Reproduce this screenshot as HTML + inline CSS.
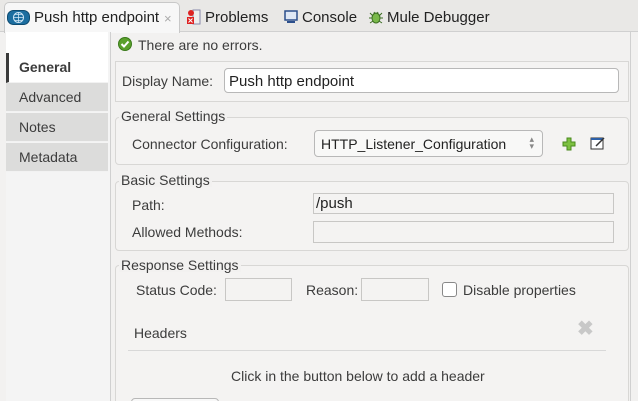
<!DOCTYPE html>
<html><head><style>
html,body{margin:0;width:638px;height:401px;overflow:hidden}
body{background:#f2f1f0;font-family:"Liberation Sans",sans-serif;font-size:14px;color:#3c3c3c;position:relative}
.a{position:absolute}
.tabbar{left:0;top:0;width:638px;height:31px;background:#e9e8e6;border-bottom:1px solid #d0d0d0}
.lbl{white-space:nowrap}
.box{background:#f4f3f2;border:1px solid #d8d7d5;border-radius:4px}
.field{background:#f4f3f2;border:1px solid #c8c7c5}
.side{left:6px;width:102px;height:29px;line-height:29px;padding-left:13px;box-sizing:border-box;background:#dcdcdb;border-bottom:1px solid #f2f2f2}
.leg{background:#f2f1f0;padding:0 2px;line-height:14px}
</style></head><body>
<div class="a tabbar"></div>
<div class="a" style="left:4px;top:2px;width:174px;height:30px;background:#f7f7f7;border:1px solid #c8c8c8;border-bottom:none;border-radius:5px 5px 0 0"></div>
<svg class="a" style="left:7px;top:10px" width="23" height="15"><rect x="0.5" y="0.5" width="22" height="14" rx="6" fill="#1c6ea0" stroke="#0e4b70"/><circle cx="11.5" cy="7.5" r="5" fill="none" stroke="#cfe6f5" stroke-width="1"/><path d="M6.5 7.5h10M11.5 2.5v10M8 4.5h7M8 10.5h7" stroke="#cfe6f5" stroke-width=".8"/></svg>
<div class="a lbl" style="left:34px;top:9px;font-size:15px;color:#222">Push http endpoint</div>
<div class="a" style="left:164px;top:11px;color:#aaa;font-size:13px">×</div>
<svg class="a" style="left:186px;top:9px" width="16" height="16"><rect x="7" y="1" width="7" height="14" fill="#eee" stroke="#88a"/><circle cx="5" cy="4" r="3" fill="#d22"/><rect x="1" y="8" width="7" height="7" fill="#d22"/><path d="M2.5 9.5l4 4M6.5 9.5l-4 4" stroke="#fff"/></svg>
<div class="a lbl" style="left:205px;top:9px;font-size:15px;color:#222">Problems</div>
<svg class="a" style="left:284px;top:10px" width="14" height="14"><rect x="1" y="1" width="12" height="9" fill="#dfe8f5" stroke="#2c4f8c" stroke-width="1.5"/><rect x="3" y="11" width="8" height="2" fill="#2c4f8c"/></svg>
<div class="a lbl" style="left:302px;top:9px;font-size:15px;color:#222">Console</div>
<svg class="a" style="left:368px;top:9px" width="16" height="16"><ellipse cx="8" cy="9" rx="4" ry="5" fill="#7ab94a" stroke="#3c6e22"/><path d="M2 4l3 3M14 4l-3 3M1 9h3M12 9h3M2 14l3-2M14 14l-3-2M6 3l1 2M10 3l-1 2" stroke="#3c6e22"/></svg>
<div class="a lbl" style="left:387px;top:9px;font-size:15px;color:#222">Mule Debugger</div>

<div class="a" style="left:6px;top:32px;width:104px;height:369px;background:#f4f4f4;border-right:1px solid #d0d0d0"></div>
<div class="a" style="left:6px;top:32px;width:102px;height:21px;background:#fff"></div>
<div class="a side" style="top:53px;background:#fff;border-left:3px solid #3a3a3a;padding-left:10px;font-weight:bold;height:30px">General</div>
<div class="a side" style="top:83px">Advanced</div>
<div class="a side" style="top:113px">Notes</div>
<div class="a side" style="top:143px">Metadata</div>
<div class="a" style="left:630px;top:32px;width:1px;height:369px;background:#d0d0d0"></div>

<svg class="a" style="left:118px;top:37px" width="14" height="14"><circle cx="7" cy="7" r="6.5" fill="#5aa02c" stroke="#3a7a1a"/><path d="M3.5 7l2.5 2.5 4.5-5" stroke="#fff" stroke-width="2" fill="none"/></svg>
<div class="a lbl" style="left:138px;top:37px">There are no errors.</div>

<div class="a box" style="left:115px;top:61px;width:512px;height:39px;border-radius:0"></div>
<div class="a lbl" style="left:122px;top:73px">Display Name:</div>
<div class="a" style="left:224px;top:68px;width:395px;height:25px;background:#fff;border:1px solid #b8b8b8;border-radius:4px;box-sizing:border-box;padding:4px 4px;font-size:15px;color:#222">Push http endpoint</div>

<div class="a box" style="left:115px;top:117px;width:512px;height:46px"></div>
<div class="a lbl leg" style="left:119px;top:109px">General Settings</div>
<div class="a lbl" style="left:132px;top:136px">Connector Configuration:</div>
<div class="a" style="left:314px;top:130px;width:229px;height:27px;background:#f8f8f7;border:1px solid #b8b8b8;border-radius:4px;box-sizing:border-box;padding:5px 6px;color:#222">HTTP_Listener_Configuration<span style="position:absolute;right:8px;top:5px;font-size:9px;color:#888;line-height:7px">▴<br>▾</span></div>
<svg class="a" style="left:562px;top:137px" width="14" height="14"><path d="M5 1h4v4h4v4h-4v4h-4v-4h-4v-4h4z" fill="#7cc040" stroke="#4a8a1e"/></svg>
<svg class="a" style="left:590px;top:136px" width="16" height="15"><rect x="1" y="2" width="12" height="11" fill="#fff" stroke="#333"/><rect x="1" y="2" width="12" height="2" fill="#2c5fa8"/><path d="M6 10l8-8" stroke="#333" stroke-width="1.5"/></svg>

<div class="a box" style="left:115px;top:181px;width:512px;height:68px"></div>
<div class="a lbl leg" style="left:119px;top:173px">Basic Settings</div>
<div class="a lbl" style="left:132px;top:197px">Path:</div>
<div class="a field" style="left:313px;top:193px;width:301px;height:21px;font-size:15px;color:#222;padding-left:2px;box-sizing:border-box;line-height:20px">/push</div>
<div class="a lbl" style="left:132px;top:224px">Allowed Methods:</div>
<div class="a field" style="left:313px;top:221px;width:301px;height:22px;box-sizing:border-box"></div>

<div class="a box" style="left:115px;top:265px;width:512px;height:136px;border-bottom:none;border-radius:4px 4px 0 0"></div>
<div class="a lbl leg" style="left:119px;top:258px">Response Settings</div>
<div class="a lbl" style="left:136px;top:282px">Status Code:</div>
<div class="a field" style="left:225px;top:278px;width:67px;height:23px;box-sizing:border-box"></div>
<div class="a lbl" style="left:306px;top:282px">Reason:</div>
<div class="a field" style="left:361px;top:278px;width:68px;height:23px;box-sizing:border-box"></div>
<div class="a" style="left:432px;top:282px;width:13px;height:13px;background:#fff;border:1px solid #888;border-radius:3px;margin-left:10px"></div>
<div class="a lbl" style="left:463px;top:282px">Disable properties</div>
<div class="a lbl" style="left:134px;top:325px">Headers</div>
<div class="a" style="left:577px;top:316px;color:#c8c8c8;font-size:20px;font-weight:bold">✖</div>
<div class="a" style="left:128px;top:350px;width:478px;height:1px;background:#d8d8d8"></div>
<div class="a lbl" style="left:231px;top:368px">Click in the button below to add a header</div>
<div class="a" style="left:131px;top:398px;width:86px;height:10px;background:#f8f8f8;border:1px solid #b8b8b8;border-radius:4px"></div>
</body></html>
